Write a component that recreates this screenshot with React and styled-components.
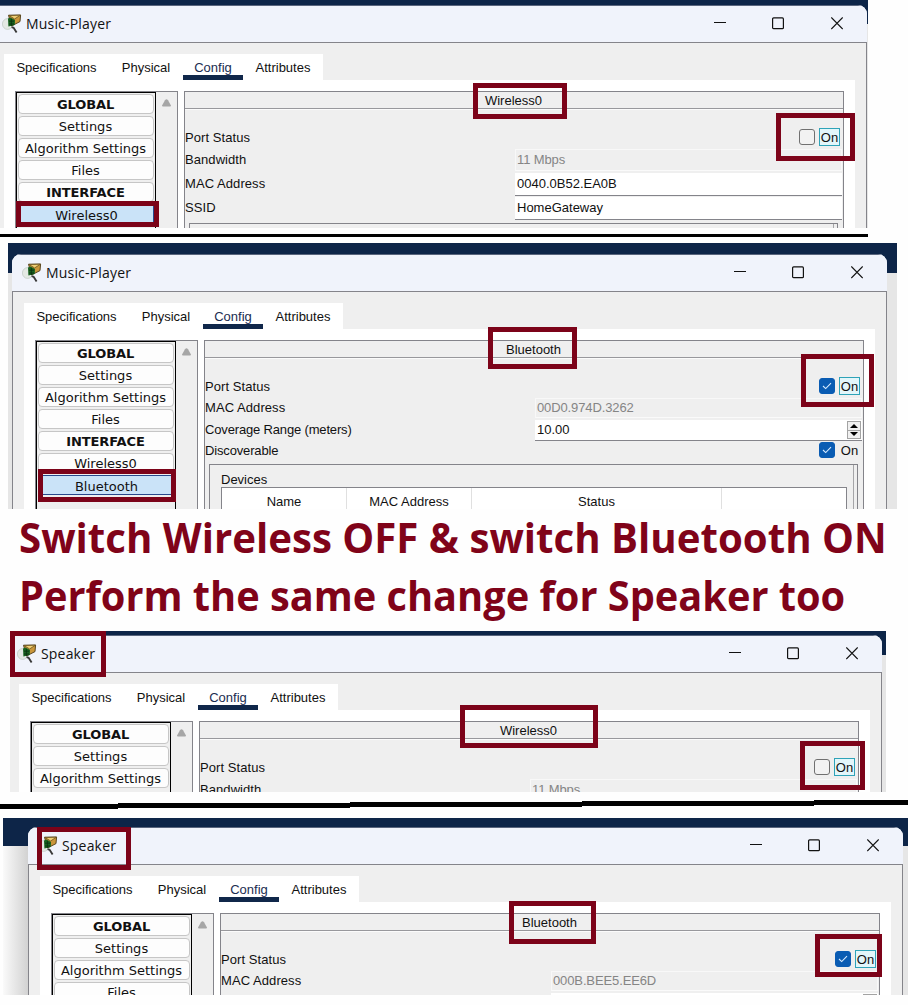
import React from "react";
import styled, { createGlobalStyle, css } from "styled-components";

const GlobalStyle = createGlobalStyle`
  html, body { margin: 0; padding: 0; background: #fefefe; }
  * { box-sizing: border-box; }
`;

const Page = styled.main`
  position: relative;
  width: 908px;
  height: 1005px;
  overflow: hidden;
  display: flex;
  flex-direction: column;
  align-items: flex-start;
  background: #fefefe;
  color: #111;
  font: 13px/16px "Liberation Sans", Arial, sans-serif;
  white-space: nowrap;
`;

const Shot = styled.section`
  flex: none;
  width: ${(p) => p.$w}px;
  height: ${(p) => p.$h}px;
  margin: ${(p) => p.$margin};
  padding-top: ${(p) => p.$top}px;
  overflow: hidden;
  background: linear-gradient(#0d2548 ${(p) => p.$navy}px, transparent ${(p) => p.$navy}px),
    ${(p) => (p.$shade ? "linear-gradient(90deg, #fafafa 0, #d2d2d2 25px, #e6e6e6 26px)" : "#e6e6e6")};
`;

const Window = styled.div`
  width: 875px;
  height: 300px;
  margin-left: ${(p) => p.$left}px;
  border-radius: ${(p) => (p.$square ? "0" : "9px")} 9px 0 0;
  overflow: hidden;
  background: #efefef;
`;

const TitleBar = styled.header`
  display: flex;
  align-items: center;
  height: 37px;
  padding: 0 24.5px 1px 10px;
  background: #f0f3fb;
  border-top: 1px solid #59657d;
`;

const Title = styled.h1`
  flex: 1;
  margin: 0 0 0 4px;
  font: 400 14px/20px "Open Sans", "Noto Sans", sans-serif;
  letter-spacing: 0.18px;
`;

const Controls = styled.div`
  display: flex;
  gap: 46.5px;
`;

const Body = styled.div`
  height: 263px;
  padding: 11px 11px 0;
  border: 1px solid #84848a;
  border-bottom: 0;
`;

const Tabs = styled.nav`
  display: flex;
  width: 319px;
  height: 26px;
  background: #fff;
`;

const Tab = styled.span`
  flex: none;
  width: ${(p) => p.$w}px;
  height: 26px;
  padding-top: 6px;
  text-align: center;
  ${(p) => p.$active && css`
    color: #1b2d50;
    border-bottom: 5px solid #10274a;
  `}
`;

const Pane = styled.div`
  display: flex;
  align-items: flex-start;
  gap: 6px;
  height: 225px;
  padding: 11px 11px 0;
  background: #fff;
`;

const ListFrame = styled.aside`
  display: flex;
  width: 163px;
  height: 214px;
  background: #efefef;
  border: 1px solid #84848a;
  border-bottom: 0;
`;

const List = styled.div`
  display: flex;
  flex-direction: column;
  gap: 2px;
  width: 140px;
  padding: 1px;
  border: 1px solid #000;
`;

const Item = styled.div`
  flex: none;
  height: 20px;
  padding: ${(p) => (p.$selected ? "1px 0 0 1px" : "0 1px 0 0")};
  text-align: center;
  font: ${(p) => (p.$bold ? 700 : 400)} 13px/19px "DejaVu Sans", Verdana, sans-serif;
  letter-spacing: ${(p) => (p.$bold ? "-0.1px" : "0")};
  background: ${(p) => (p.$selected ? "#cae3f8" : "#fdfdfd")};
  border: 1px solid ${(p) => (p.$selected ? "#27488c" : "#c6c6c6")};
  border-radius: ${(p) => (p.$selected ? 0 : 4)}px;
`;

const Scroll = styled.div`
  padding: 7px 0 0 6px;
  line-height: 0;
`;

const Panel = styled.section`
  width: 660px;
  height: 214px;
  background: #efefef;
  border: 1px solid #84848a;
  border-bottom: 0;
`;

const PanelTitle = styled.div`
  height: 17px;
  text-align: center;
  line-height: 18px;
  border-bottom: 1px solid #98989c;
  box-shadow: 0 1px #fbfbfb;
  padding-right: 1px;
`;

const Rows = styled.div`
  padding-top: 18px;
`;

const Row = styled.div`
  display: flex;
  align-items: flex-start;
  height: ${(p) => p.$h}px;
`;

const Label = styled.span`
  width: 330px;
  padding-top: ${(p) => p.$pt}px;
  letter-spacing: ${(p) => p.$ls ?? 0.07}px;
`;

const Field = styled.div`
  display: flex;
  justify-content: space-between;
  width: 327px;
  height: ${(p) => p.$h}px;
  padding: ${(p) => p.$pt}px 1px 0 ${(p) => (p.$disabled ? 1 : 2)}px;
  background: ${(p) => (p.$disabled ? "#efefef" : "#fff")};
  color: ${(p) => (p.$disabled ? "#858585" : "#111")};
  border: ${(p) => (p.$disabled ? "1px solid #f8f8f8" : "0")};
  border-bottom: 1px solid ${(p) => (p.$disabled ? "#fafafa" : "#84848a")};
  letter-spacing: ${(p) => (p.$disabled ? -0.12 : 0)}px;
`;

const Check = styled.span`
  display: flex;
  align-items: center;
  gap: 4px;
  margin-left: 284px;
  padding-top: ${(p) => p.$pt}px;
`;

const Box = styled.i`
  display: flex;
  align-items: center;
  justify-content: center;
  width: 16px;
  height: 16px;
  border: 1px solid ${(p) => (p.$on ? "#0a5cb3" : "#707070")};
  border-radius: 3px;
  background: ${(p) => (p.$on ? "#0a5cb3" : "#f2f2f2")};
`;

const On = styled.span`
  width: 21px;
  height: 18px;
  text-align: center;
  line-height: 17px;
  border: 1px solid ${(p) => (p.$focus ? "#2fa3b8" : "transparent")};
  background: ${(p) => (p.$focus ? "#e3f6fa" : "transparent")};
`;

const Spinner = styled.div`
  display: flex;
  flex-direction: column;
  width: 14px;
  height: 18px;
  margin-top: ${(p) => p.$mt}px;
  border: 1px solid #a3a3a3;
  background: #f0f0f0;
`;

const SpinHalf = styled.span`
  display: flex;
  flex: 1;
  align-items: center;
  justify-content: center;
  & + & { border-top: 1px solid #a3a3a3; }
`;

const Group = styled.div`
  height: 80px;
  margin: 0 5px 0 4px;
  padding: 6px 10px 0 11px;
  border: 1px solid #84848a;
  box-shadow: inset -3px 0 #efefef, inset -4px 0 #a5a5a8;
`;

const GroupLabel = styled.div`
  height: 16px;
  padding-top: 1px;
  line-height: 16px;
`;

const Table = styled.div`
  display: grid;
  grid-template-columns: 124px 125px 250px 1fr;
  height: 50px;
  border: 1px solid #84848a;
  background: #fff;
`;

const HeadCell = styled.span`
  padding-top: 6px;
  text-align: center;
  & + & { border-left: 1px solid #e0e0e0; }
`;

const Rule = styled.div`
  flex: none;
  width: 868px;
  height: 3px;
  margin-top: 6px;
  background: #000;
`;

const SteppedRule = styled.div`
  flex: none;
  display: flex;
  align-items: flex-end;
  height: 9px;
  width: 908px;
  margin-top: 8px;
`;

const Step = styled.i`
  width: ${(p) => p.$w}px;
  height: 5px;
  margin-bottom: ${(p) => p.$up}px;
  background: #000;
`;

const Headline = styled.div`
  flex: none;
  height: 122px;
  padding-left: 19px;
`;

const HeadlineText = styled.p`
  margin: 0;
  width: max-content;
  height: 58px;
  color: #800319;
  font: 700 42px/55px "Open Sans", "Noto Sans", sans-serif;
  transform: scaleX(${(p) => p.$sx});
  transform-origin: 0 0;
`;

const Mark = styled.div`
  position: absolute;
  left: ${(p) => p.$x}px;
  top: ${(p) => p.$y}px;
  width: ${(p) => p.$w}px;
  height: ${(p) => p.$h}px;
  border: 5px solid #7c0319;
`;

const AppIcon = () => (
  <svg width="20" height="20" viewBox="0 0 20 20">
    <ellipse cx="5.6" cy="10" rx="5.2" ry="5.4" fill="#e3e9e4" stroke="#c3ccc6" strokeWidth=".8" />
    <path d="M6.5 1.2 18.6 1 18 7.6 9.5 12Z" fill="#c9963a" stroke="#493814" strokeWidth=".9" />
    <path d="M7.2 1.6 12.6 5 18.3 1.2Z" fill="#f0cf74" stroke="#6b5320" strokeWidth=".8" />
    <path d="M6 4.4 8.5 3.4 13 6 12.8 11 6.4 12.6Z" fill="#17621f" />
    <path d="M7 7.2h5M7 10h5M9.4 5v7" stroke="#0a2e10" strokeWidth=".8" />
    <path d="m9.6 13.2 2 .6 3 4.6" fill="none" stroke="#3a3a3a" strokeWidth="1.9" />
  </svg>
);

const WindowButtons = () => (
  <Controls>
    <svg width="12" height="13" viewBox="0 0 12 13"><path d="M0 5.5h12" stroke="#111" /></svg>
    <svg width="12" height="13" viewBox="0 0 12 13"><rect x=".6" y=".9" width="10.8" height="10.8" rx="1" fill="none" stroke="#111" strokeWidth="1.2" /></svg>
    <svg width="12" height="13" viewBox="0 0 12 13"><path d="m.3.5 11.4 11.5M11.7.5.3 12" stroke="#111" strokeWidth="1.15" /></svg>
  </Controls>
);

const Toggle = ({ on, focus, pt = 2 }) => (
  <Check $pt={pt}>
    <Box $on={on}>
      {on && <svg width="10" height="8" viewBox="0 0 10 8"><path d="m1 4 2.7 2.6L9 1.2" fill="none" stroke="#d7ebff" strokeWidth="1.1" /></svg>}
    </Box>
    <On $focus={focus}>On</On>
  </Check>
);

const Arrow = ({ down }) => (
  <svg width="8" height="4" viewBox="0 0 8 4"><path d={down ? "M0 0h8L4 4Z" : "M0 4h8L4 0Z"} fill="#000" /></svg>
);

const tabs = [["Specifications", 105], ["Physical", 74], ["Config", 60], ["Attributes", 80]];

function DeviceWindow({ name, items, selected, port, left, square, children }) {
  return (
    <Window $left={left} $square={square}>
      <TitleBar><AppIcon /><Title>{name}</Title><WindowButtons /></TitleBar>
      <Body>
        <Tabs>{tabs.map(([t, w]) => <Tab key={t} $w={w} $active={t === "Config"}>{t}</Tab>)}</Tabs>
        <Pane>
          <ListFrame>
            <List>
              {items.map((t) => <Item key={t} $bold={t === t.toUpperCase()} $selected={t === selected}>{t}</Item>)}
            </List>
            <Scroll><svg width="9" height="8" viewBox="0 0 9 8"><path d="M3 1.2Q4.5-.5 6 1.2L9 6.5Q9 7.5 8 7.5H1Q0 7.5 0 6.5Z" fill="#a6a6a6" /></svg></Scroll>
          </ListFrame>
          <Panel>
            <PanelTitle>{port}</PanelTitle>
            <Rows>{children}</Rows>
          </Panel>
        </Pane>
      </Body>
    </Window>
  );
}

const PortStatus = ({ on }) => (
  <Row $h={22}><Label $pt={3}>Port Status</Label><Toggle on={on} focus pt={1} /></Row>
);

const Bandwidth = () => (
  <Row $h={24}><Label $pt={3}>Bandwidth</Label><Field $h={22} $pt={2} $disabled>11 Mbps</Field></Row>
);

const BluetoothAddress = ({ mac }) => (
  <Row $h={22}><Label $pt={2}>MAC Address</Label><Field $h={20} $pt={1} $disabled>{mac}</Field></Row>
);

const CoverageField = ({ range }) => (
  <Field $h={21} $pt={2}><span>{range}</span><Spinner $mt={-1}><SpinHalf><Arrow /></SpinHalf><SpinHalf><Arrow down /></SpinHalf></Spinner></Field>
);

const allItems = ["GLOBAL", "Settings", "Algorithm Settings", "Files", "INTERFACE", "Wireless0", "Bluetooth"];

const marks = [
  [473, 83, 94, 36], [776, 113, 79, 48], [16, 201, 143, 26],
  [488, 327, 89, 42], [801, 354, 73, 53], [38, 469, 138, 33],
  [10, 631, 96, 46], [460, 705, 138, 43], [800, 741, 65, 49],
  [37, 827, 94, 43], [509, 901, 87, 43], [815, 934, 67, 43],
];

export default function App() {
  return (
    <Page>
      <GlobalStyle />
      <Shot $w={868} $h={228} $margin="0" $top={5} $navy={24}>
        <DeviceWindow name="Music-Player" items={allItems.slice(0, 6)} selected="Wireless0" port="Wireless0" left={-8} square>
          <PortStatus on={false} />
          <Bandwidth />
          <Row $h={24}><Label $pt={3}>MAC Address</Label><Field $h={23} $pt={3}>0040.0B52.EA0B</Field></Row>
          <Row $h={26}><Label $pt={3}>SSID</Label><Field $h={23} $pt={3}>HomeGateway</Field></Row>
          <Group />
        </DeviceWindow>
      </Shot>
      <Rule />
      <Shot $w={889} $h={266} $margin="6px 0 0 8px" $top={11} $navy={30}>
        <DeviceWindow name="Music-Player" items={allItems} selected="Bluetooth" port="Bluetooth" left={4}>
          <PortStatus on />
          <BluetoothAddress mac="00D0.974D.3262" />
          <Row $h={21}><Label $pt={2} $ls={-0.16}>Coverage Range (meters)</Label><CoverageField range="10.00" /></Row>
          <Row $h={23}><Label $pt={2} $ls={-0.15}>Discoverable</Label><Toggle on pt={0} /></Row>
          <Group>
            <GroupLabel>Devices</GroupLabel>
            <Table><HeadCell>Name</HeadCell><HeadCell>MAC Address</HeadCell><HeadCell>Status</HeadCell><HeadCell /></Table>
          </Group>
        </DeviceWindow>
      </Shot>
      <Headline>
        <HeadlineText $sx={0.957}>Switch Wireless OFF &amp; switch Bluetooth ON</HeadlineText>
        <HeadlineText $sx={0.946}>Perform the same change for Speaker too</HeadlineText>
      </Headline>
      <Shot $w={876} $h={161} $margin="0 0 0 10px" $top={4} $navy={24}>
        <DeviceWindow name="Speaker" items={allItems.slice(0, 3)} port="Wireless0" left={-3} square>
          <PortStatus on={false} />
          <Bandwidth />
        </DeviceWindow>
      </Shot>
      <SteppedRule>
        <Step $w={118} $up={0} /><Step $w={232} $up={1} /><Step $w={232} $up={2} />
        <Step $w={232} $up={3} /><Step $w={94} $up={4} />
      </SteppedRule>
      <Shot $w={905} $h={177} $margin="9px 0 0 3px" $top={9} $navy={28} $shade>
        <DeviceWindow name="Speaker" items={allItems.slice(0, 4)} port="Bluetooth" left={25}>
          <PortStatus on />
          <BluetoothAddress mac="000B.BEE5.EE6D" />
          <Row $h={21}><Label $pt={2} /><CoverageField /></Row>
        </DeviceWindow>
      </Shot>
      {marks.map(([x, y, w, h]) => <Mark key={`${x}-${y}`} $x={x} $y={y} $w={w} $h={h} />)}
    </Page>
  );
}
